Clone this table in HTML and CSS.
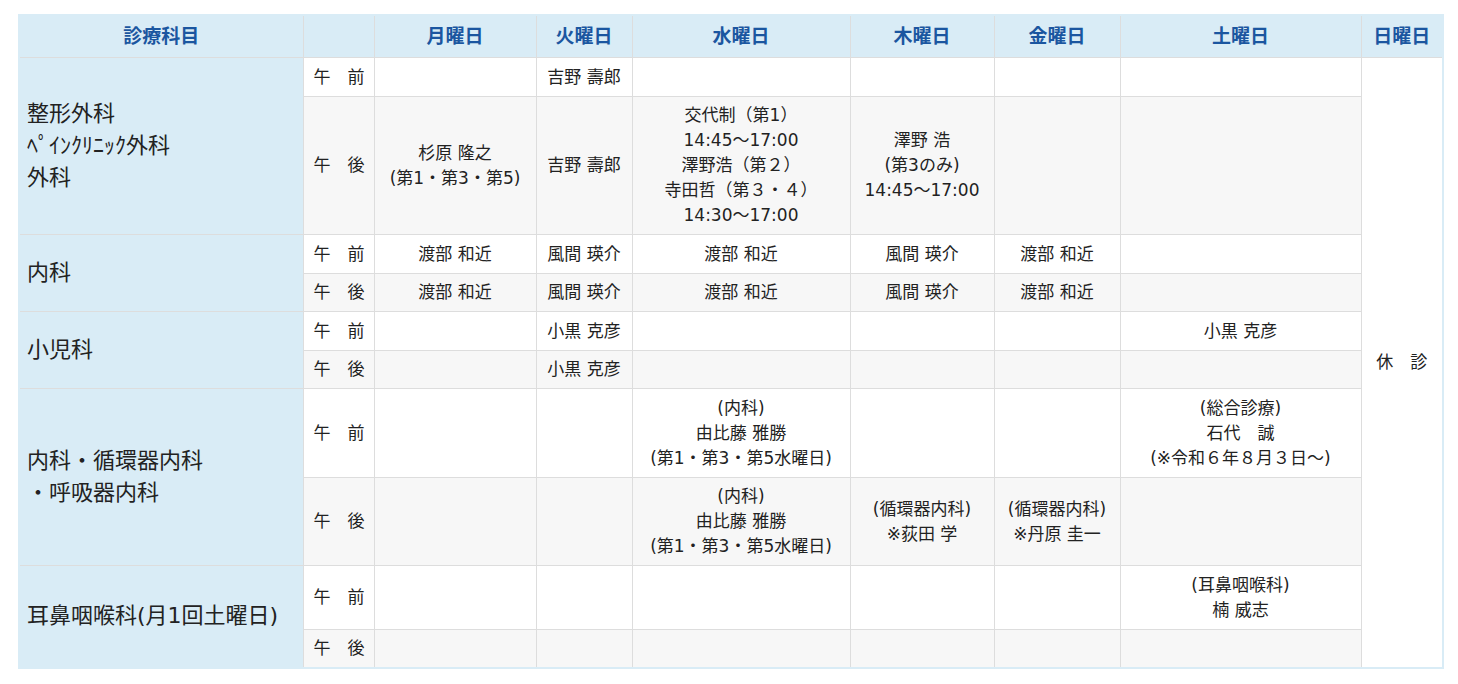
FILE: index.html
```html
<!DOCTYPE html>
<html lang="ja">
<head>
<meta charset="utf-8">
<title>外来診療担当表</title>
<link rel="stylesheet" href="styles.css">
</head>
<body>
<table class="schedule">
  <colgroup>
    <col class="c-dept"><col class="c-time"><col class="c-mon"><col class="c-tue"><col class="c-wed"><col class="c-thu"><col class="c-fri"><col class="c-sat"><col class="c-sun">
  </colgroup>
  <thead>
    <tr class="r-head">
      <th>診療科目</th><th></th><th>月曜日</th><th>火曜日</th><th>水曜日</th><th>木曜日</th><th>金曜日</th><th>土曜日</th><th>日曜日</th>
    </tr>
  </thead>
  <tbody>
    <tr class="am r-39">
      <td class="dept" rowspan="2">整形外科<br>ﾍﾟｲﾝｸﾘﾆｯｸ外科<br>外科</td>
      <td class="time">午　前</td><td></td><td>吉野 壽郎</td><td></td><td></td><td></td><td></td>
      <td class="closed" rowspan="10">休　診</td>
    </tr>
    <tr class="pm r-138">
      <td class="time">午　後</td><td>杉原 隆之<br>(第1・第3・第5)</td><td>吉野 壽郎</td>
      <td>交代制（第1）<br>14:45～17:00<br>澤野浩（第２）<br>寺田哲（第３・４）<br>14:30～17:00</td>
      <td>澤野 浩<br>(第3のみ)<br>14:45～17:00</td><td></td><td></td>
    </tr>
    <tr class="am r-39">
      <td class="dept" rowspan="2">内科</td>
      <td class="time">午　前</td><td>渡部 和近</td><td>風間 瑛介</td><td>渡部 和近</td><td>風間 瑛介</td><td>渡部 和近</td><td></td>
    </tr>
    <tr class="pm r-38">
      <td class="time">午　後</td><td>渡部 和近</td><td>風間 瑛介</td><td>渡部 和近</td><td>風間 瑛介</td><td>渡部 和近</td><td></td>
    </tr>
    <tr class="am r-39">
      <td class="dept" rowspan="2">小児科</td>
      <td class="time">午　前</td><td></td><td>小黒 克彦</td><td></td><td></td><td></td><td>小黒 克彦</td>
    </tr>
    <tr class="pm r-38">
      <td class="time">午　後</td><td></td><td>小黒 克彦</td><td></td><td></td><td></td><td></td>
    </tr>
    <tr class="am r-89">
      <td class="dept" rowspan="2">内科・循環器内科<br>・呼吸器内科</td>
      <td class="time">午　前</td><td></td><td></td><td>(内科)<br>由比藤 雅勝<br>(第1・第3・第5水曜日)</td><td></td><td></td>
      <td>(総合診療)<br>石代　誠<br>(※令和６年８月３日～)</td>
    </tr>
    <tr class="pm r-88">
      <td class="time">午　後</td><td></td><td></td><td>(内科)<br>由比藤 雅勝<br>(第1・第3・第5水曜日)</td>
      <td>(循環器内科)<br>※荻田 学</td><td>(循環器内科)<br>※丹原 圭一</td><td></td>
    </tr>
    <tr class="am r-64">
      <td class="dept" rowspan="2">耳鼻咽喉科(月1回土曜日)</td>
      <td class="time">午　前</td><td></td><td></td><td></td><td></td><td></td><td>(耳鼻咽喉科)<br>楠 威志</td>
    </tr>
    <tr class="pm r-38">
      <td class="time">午　後</td><td></td><td></td><td></td><td></td><td></td><td></td>
    </tr>
  </tbody>
</table>
</body>
</html>
```

FILE: styles.css
```css
html, body {
  margin: 0;
  padding: 0;
  background: #ffffff;
}
body {
  padding: 14px 16px 0 18px;
  font-family: "DejaVu Sans", "Noto Sans CJK JP", sans-serif;
  color: #222222;
}
.schedule {
  width: 1424px;
  border-collapse: collapse;
  table-layout: fixed;
  border: 2px solid #d9ecf6;
  font-size: 17px;
  line-height: 25px;
}
.c-dept { width: 284px; }
.c-time { width: 71px; }
.c-mon { width: 162px; }
.c-tue { width: 96px; }
.c-wed { width: 218px; }
.c-thu { width: 144px; }
.c-fri { width: 126px; }
.c-sat { width: 241px; }
.c-sun { width: 82px; }

.schedule th,
.schedule td {
  border: 1px solid #dddddd;
  padding: 0;
  text-align: center;
  vertical-align: middle;
  font-weight: normal;
}
.schedule thead th {
  background: #d9ecf6;
  color: #1b56a0;
  font-weight: bold;
  font-size: 19px;
  height: 41px;
  border-top-color: #d9ecf6;
  border-bottom-color: #dddddd;
}
.schedule thead th:first-child { border-left-color: #d9ecf6; }
.schedule thead th:last-child { border-right-color: #d9ecf6; }

.am td { background: #ffffff; }
.pm td { background: #f7f7f7; }

.schedule td.dept {
  background: #d9ecf6;
  text-align: left;
  padding-left: 7px;
  font-size: 22px;
  line-height: 32px;
  border-left-color: #d9ecf6;
  border-bottom-color: #dddddd;
}
.schedule td.time {
  text-align: left;
  padding-left: 10px;
}
.schedule td.closed {
  background: #ffffff;
  border-right-color: #d9ecf6;
}
tbody tr:last-child td { border-bottom-color: #d9ecf6; }

.r-38 { height: 38px; }
.r-39 { height: 39px; }
.r-64 { height: 64px; }
.r-88 { height: 88px; }
.r-89 { height: 89px; }
.r-138 { height: 138px; }
```
